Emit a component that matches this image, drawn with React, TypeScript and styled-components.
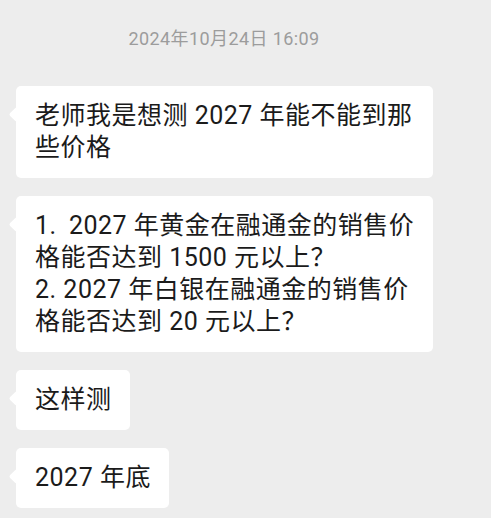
import styled, { createGlobalStyle } from "styled-components";

const GlobalStyle = createGlobalStyle`
  html, body {
    margin: 0;
    padding: 0;
    background: #ededed;
  }
  body {
    font-family: Roboto, "Noto Sans CJK SC", sans-serif;
  }
`;

const Chat = styled.div`
  display: flex;
  flex-direction: column;
  min-height: 518px;
  padding: 28px 0 0 16px;
  box-sizing: border-box;
`;

// the screenshot is cropped, so the stamp sits left of the middle
const Time = styled.div`
  align-self: center;
  margin-right: 59px;
  margin-bottom: 36px;
  font-size: 18px;
  line-height: 22px;
  letter-spacing: 0.4px;
  color: #9c9c9c;
`;

const List = styled.div`
  display: flex;
  flex-direction: column;
  align-items: flex-start;
  gap: 18px;
`;

// left (received) bubble with the little tail
const Bubble = styled.div`
  position: relative;
  max-width: 417px;
  box-sizing: border-box;
  padding: 14px 18px 14px 19px;
  background: #ffffff;
  border-radius: 5px;
  font-size: 25px;
  line-height: 32px;
  letter-spacing: 0.5px;
  color: #1b1b1b;
  word-break: break-all;

  &::before {
    content: "";
    position: absolute;
    left: -5px;
    top: 23px;
    width: 11px;
    height: 11px;
    background: #ffffff;
    border-radius: 2px;
    transform: rotate(45deg);
  }
`;

const messages = [
  "老师我是想测 2027 年能不能到那些价格",
  "1.\u2009 2027 年黄金在融通金的销售价格能否达到 1500 元以上？\n2. 2027 年白银在融通金的销售价格能否达到 20 元以上？",
  "这样测",
  "2027 年底",
];

export default function App() {
  return (
    <>
      <GlobalStyle />
      <Chat>
        <Time>2024年10月24日 16:09</Time>
        <List>
          {messages.map((text) => (
            <Bubble key={text}>
              {text.split("\n").map((line) => (
                <div key={line}>{line}</div>
              ))}
            </Bubble>
          ))}
        </List>
      </Chat>
    </>
  );
}
